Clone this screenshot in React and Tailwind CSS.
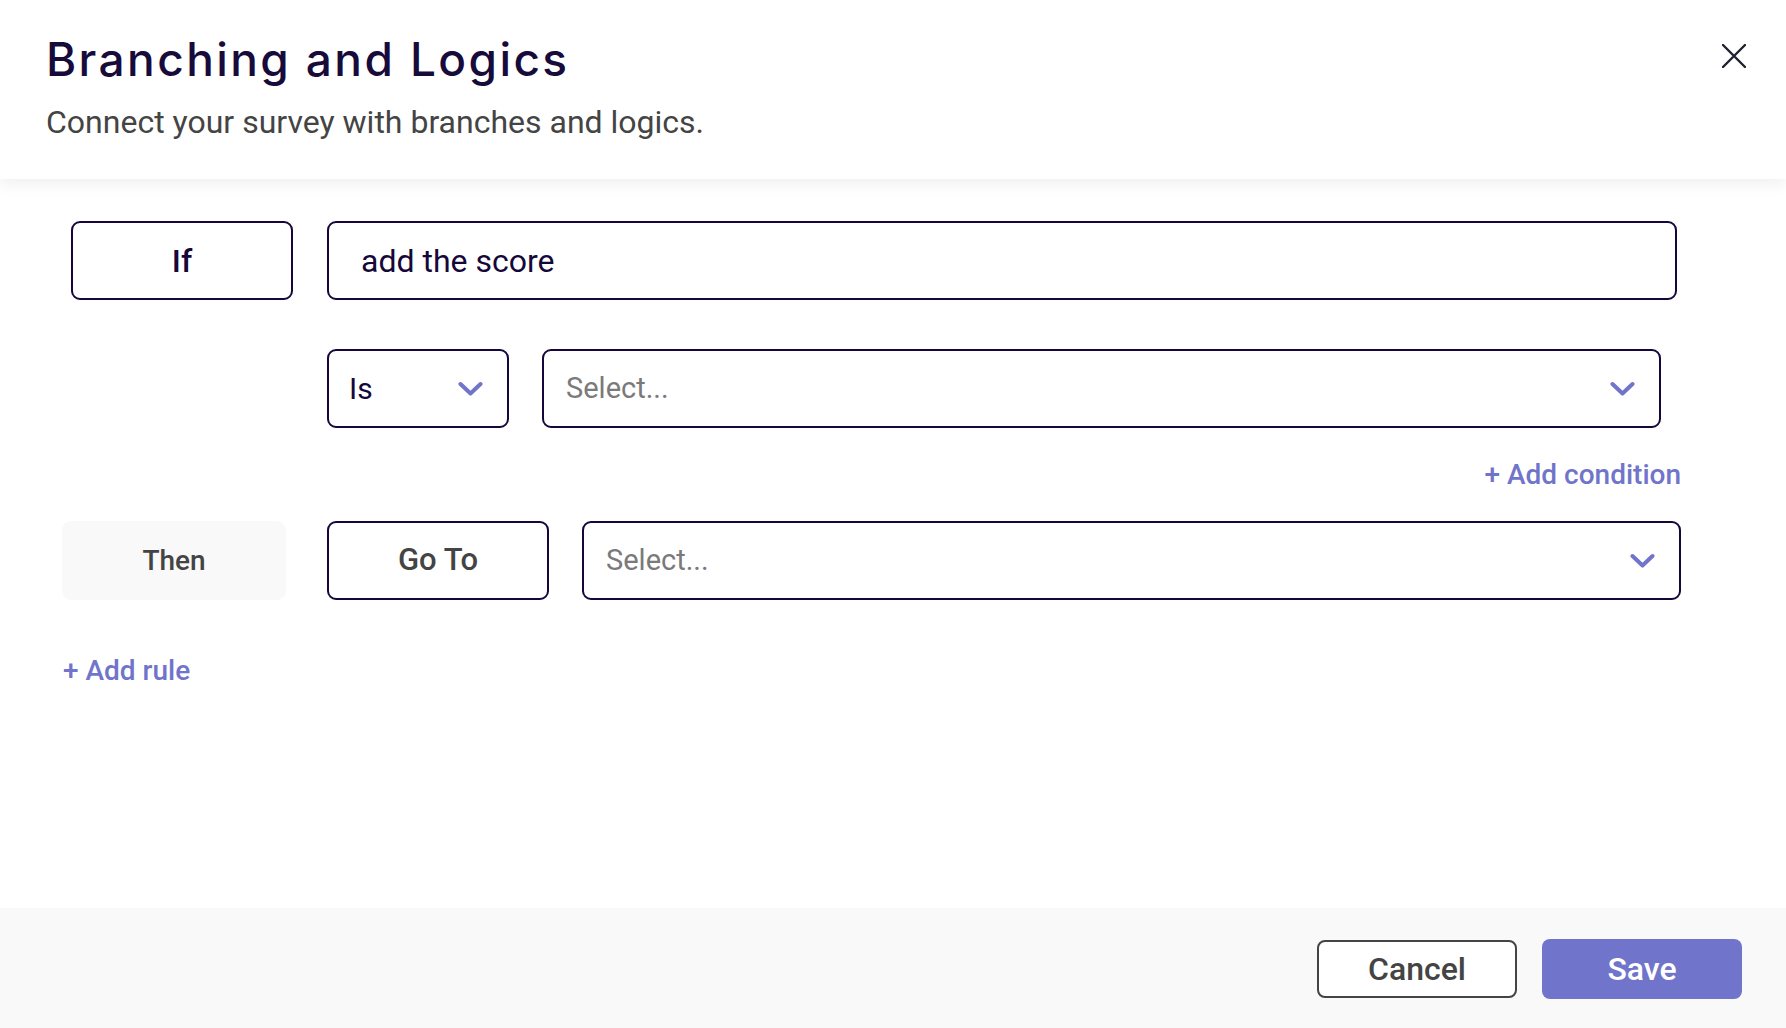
import React from 'react';

const chevron = (
  <svg width="25" height="16" viewBox="0 0 25 16" fill="none" className="shrink-0">
    <path d="M2.5 3l10 9.5 10-9.5" stroke="#7174cb" strokeWidth="4" strokeLinecap="round" strokeLinejoin="round" />
  </svg>
);

function SelectBox({ width, label, placeholder, pl = 'pl-[22px]' }) {
  return (
    <div className={`${width} h-[79px] border-2 border-[#150739] rounded-[9px] flex items-center justify-between ${pl} pr-[24px] bg-white`}>
      {label ? (
        <span className="text-[30px] text-[#150739]">{label}</span>
      ) : (
        <span className="text-[29px] text-[#7a7a7a]">{placeholder}</span>
      )}
      {chevron}
    </div>
  );
}

export default function App() {
  return (
    <div className="h-screen w-full flex flex-col bg-white overflow-hidden font-['Roboto','Liberation_Sans',sans-serif]">
      {/* header */}
      <header className="h-[179px] shrink-0 flex justify-between items-start pl-[46px] pr-[40px] pt-[36px] bg-white shadow-[0_6px_14px_rgba(0,0,0,0.06)] relative z-10">
        <div>
          <h1 className="text-[46px] leading-[46px] font-medium text-[#170b3b] tracking-[2.4px] font-['Inter','Noto_Sans',sans-serif]">
            Branching and Logics
          </h1>
          <p className="mt-[24px] text-[32px] leading-[32px] text-[#444]">
            Connect your survey with branches and logics.
          </p>
        </div>
        <button className="mt-[8px]" aria-label="close">
          <svg width="24" height="24" viewBox="0 0 24 24" fill="none">
            <path d="M1 1l22 22M23 1L1 23" stroke="#1e2230" strokeWidth="2.4" strokeLinecap="round" />
          </svg>
        </button>
      </header>

      {/* rules */}
      <main className="flex-1 pl-[62px] pt-[42px]">
        <div className="flex items-center">
          <div className="ml-[9px] w-[222px] h-[79px] border-2 border-[#150739] rounded-[9px] flex items-center justify-center text-[32px] font-medium text-[#150739]">
            If
          </div>
          <div className="ml-[34px] w-[1350px] h-[79px] border-2 border-[#150739] rounded-[9px] flex items-center pl-[32px] text-[32px] text-[#150739]">
            add the score
          </div>
        </div>

        <div className="flex items-center mt-[49px] ml-[265px]">
          <SelectBox width="w-[182px]" label="Is" pl="pl-[20px]" />
          <div className="ml-[33px]">
            <SelectBox width="w-[1119px]" placeholder="Select..." />
          </div>
        </div>

        <div className="w-[1619px] flex justify-end mt-[33px]">
          <button className="text-[28px] leading-[27px] font-medium text-[#7174cb]">+ Add condition</button>
        </div>

        <div className="flex items-center mt-[33px]">
          <div className="w-[224px] h-[79px] rounded-[9px] bg-[#f9f9f9] flex items-center justify-center text-[28px] font-medium text-[#444]">
            Then
          </div>
          <div className="ml-[41px] w-[222px] h-[79px] border-2 border-[#150739] rounded-[9px] flex items-center justify-center text-[31px] font-medium text-[#444]">
            Go To
          </div>
          <div className="ml-[33px]">
            <SelectBox width="w-[1099px]" placeholder="Select..." />
          </div>
        </div>

        <button className="mt-[57px] ml-[1px] text-[28px] leading-[27px] font-medium text-[#7174cb]">+ Add rule</button>
      </main>

      {/* footer */}
      <footer className="h-[120px] shrink-0 bg-[#f9f9f9] flex items-center justify-end pr-[44px] gap-[25px]">
        <button className="w-[200px] h-[58px] mt-[2px] rounded-[8px] border-2 border-[#444] bg-white text-[32px] font-medium text-[#444]">
          Cancel
        </button>
        <button className="w-[200px] h-[60px] mt-[2px] rounded-[8px] bg-[#7174cb] text-[32px] font-medium text-white">
          Save
        </button>
      </footer>
    </div>
  );
}
